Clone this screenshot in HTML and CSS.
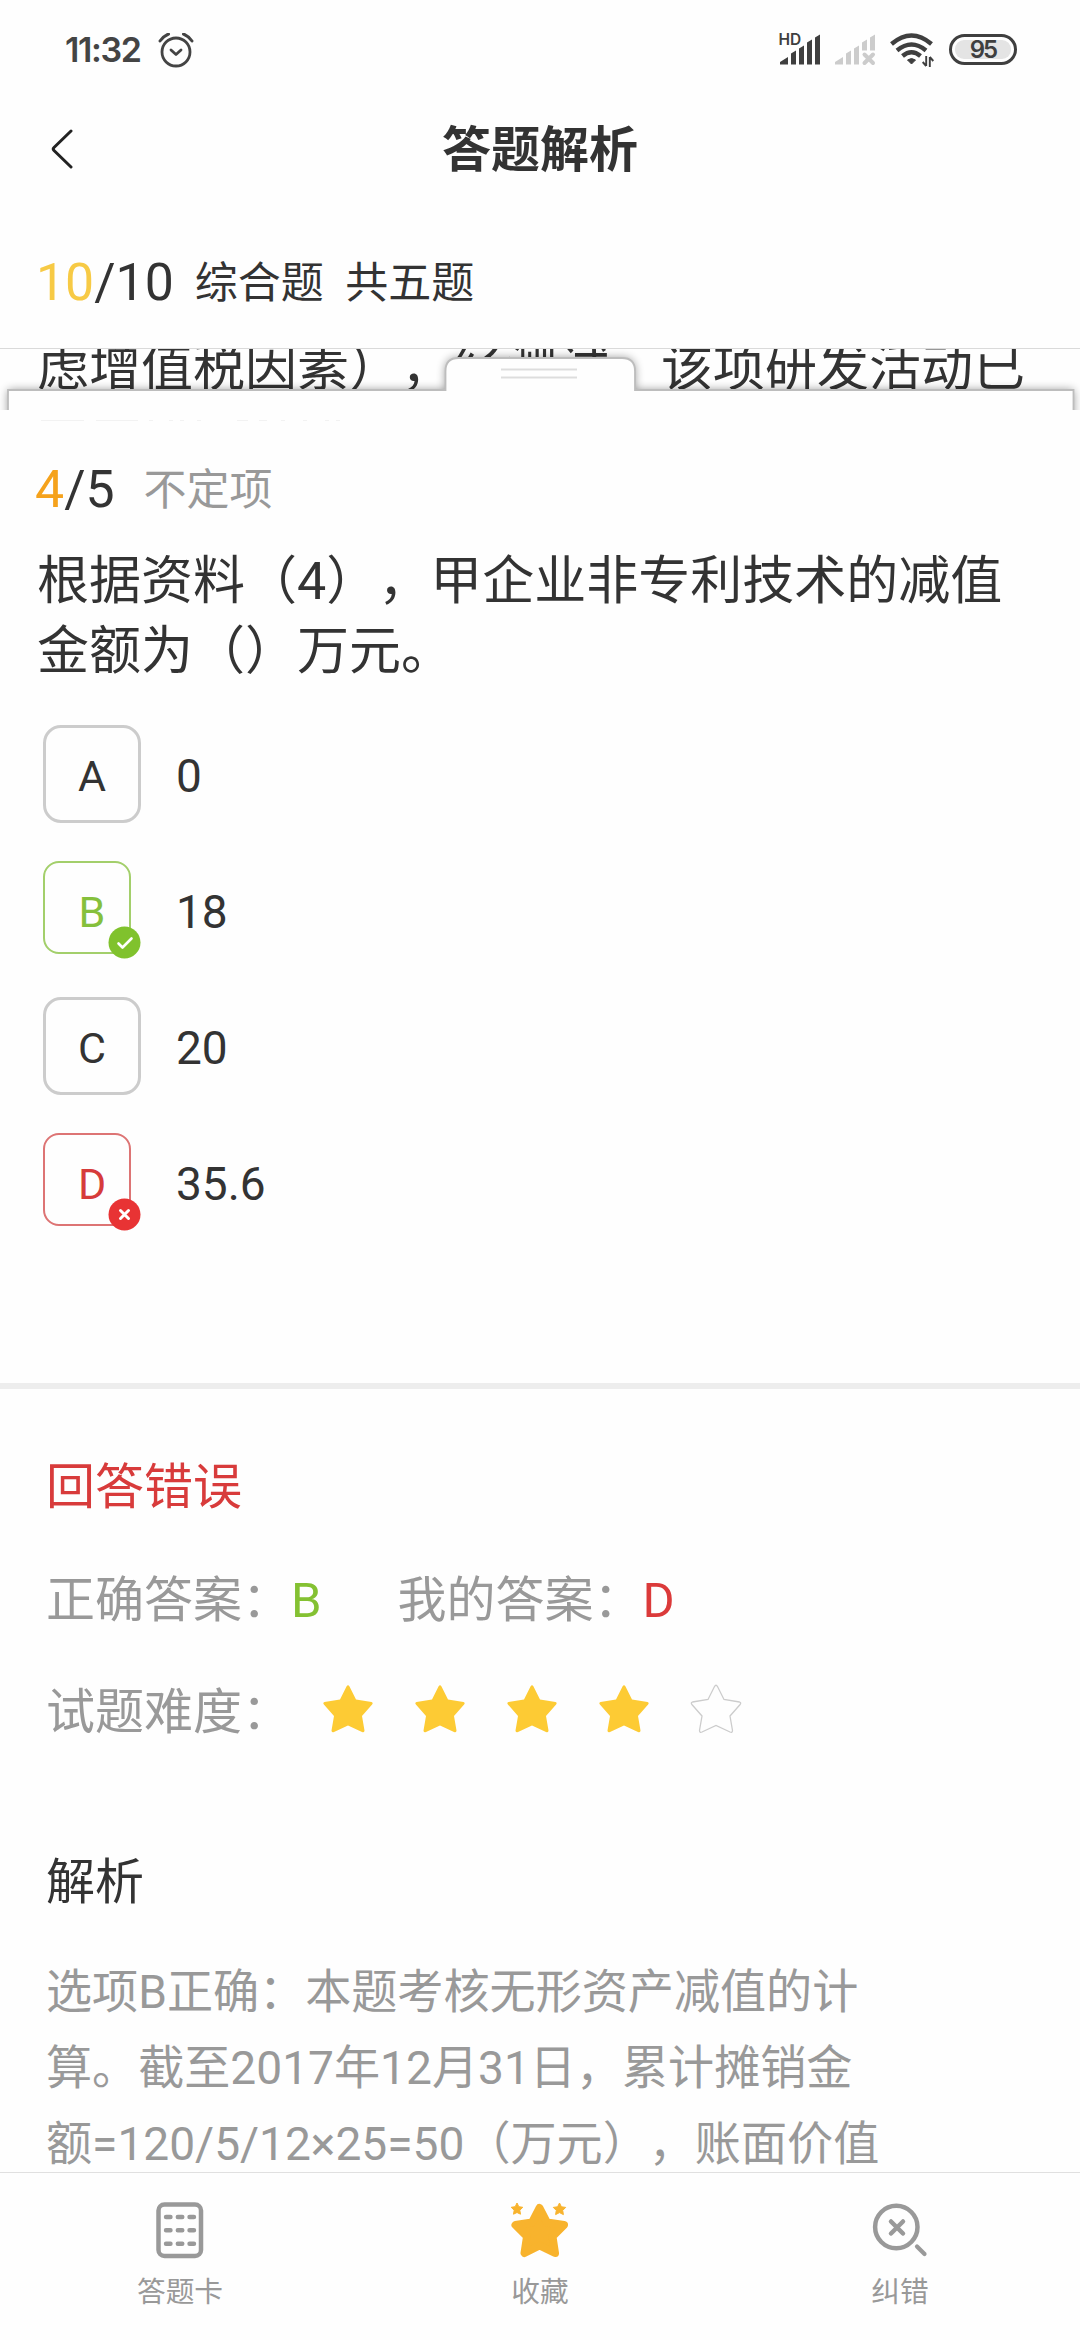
FILE: index.html
```html
<!DOCTYPE html>
<html lang="zh-CN">
<head>
<meta charset="utf-8">
<title>答题解析</title>
<link rel="stylesheet" href="styles.css">
</head>
<body>
<div class="app">
  <header class="status">
    <span class="time">11:32</span>
    <svg class="alarm" width="36" height="36" viewBox="0 0 36 36" fill="none" stroke="#444" stroke-width="2.8" stroke-linecap="round" stroke-linejoin="round"><circle cx="18" cy="19" r="14"/><path d="M13 17l5 4.500 5-4.500"/><path d="M2 8q3.500-5 8.500-7M34 8q-3.500-5-8.500-7" stroke-width="3"/></svg>
    <div class="signals">
      <svg width="42" height="34" viewBox="0 0 42 34" fill="#3f3f3f"><text x="-.5" y="12" class="hd">HD</text><path d="M1 31.500v-2.500l8-5v7.500zM12 31.500v-11l5-3v14zM20 31.500v-16l5-3v19zM28 31.500v-22l5-3v25zM36 31.500v-27l5-3v30z"/></svg>
      <svg width="42" height="34" viewBox="0 0 42 34" fill="#ccc"><path d="M1 31.500v-2.500l8-5v7.500zM12 31.500v-11l5-3v14zM20 31.500v-16l5-3v19zM28 17.500v-8l5-3v11zM36 17.500v-13l5-3v16z"/><path d="M30.500 21.500l8.500 8.500m0-8.500l-8.500 8.500" stroke="#ccc" stroke-width="4" stroke-linecap="round"/></svg>
      <svg class="wifi" width="44" height="36" viewBox="0 0 44 36" fill="none" stroke="#3f3f3f" stroke-width="4.400"><path d="M1.500 12Q21.500-5 41.500 12M7 18.500q14.500-12 29 0M12.500 24q9-7.500 18 0"/><path d="M17.500 28q4-3 8 0l-4 4z" fill="#3f3f3f" stroke-width="1"/><path d="M36.200 24v10M39.800 35V25M36.200 34l-3.500-4M39.800 25l3.500 4" stroke-width="1.900"/></svg>
      <div class="battery"><span>95</span></div>
    </div>
  </header>

  <nav class="titlebar">
    <svg class="back" width="22" height="40" viewBox="0 0 22 40" fill="none" stroke="#222" stroke-width="3" stroke-linecap="round" stroke-linejoin="round"><path d="M20 2L3 18.500q-1.500 1.500 0 3L20 38"/></svg>
    <h1>答题解析</h1>
  </nav>

  <div class="progress"><span class="count"><b>10</b>/10</span><span class="kind">综合题&nbsp; 共五题</span></div>

  <section class="passage">
    <p>虑增值税因素），经测试，该项研发活动已</p>
    <svg class="sheet-edge" width="1080" height="76" viewBox="0 0 1080 76">
      <defs>
        <filter id="soft" x="-5%" y="-50%" width="110%" height="200%"><feGaussianBlur stdDeviation="5"/></filter>
        <clipPath id="edge"><path d="M0 0H1080V62H0z"/></clipPath>
      </defs>
      <g clip-path="url(#edge)">
        <path d="M8 90V42H445.500V23q0-13 13-13H622q13 0 13 13V42H1073.500V90z" fill="#000" opacity=".42" filter="url(#soft)"/>
        <path d="M8 90V42H445.500V23q0-13 13-13H622q13 0 13 13V42H1073.500V90z" fill="#fefefe" stroke="#bdbdbd" stroke-width="1.800"/>
      </g>
      <path d="M0 62H1080V76H0z" fill="#fefefe"/>
      <path d="M41 72.500h43M96 72.500h42M149 72.500h4M169 72.500h4M180 72.500h4M197 72.500h4M237 72.500h11M259 72.500h8M281 72.500h4M303 72.500h4M325 72.500h4M336 72.500h4" stroke="#f2f2f2"/>
      <path d="M501 21.500h76M501 29.500h76" stroke="#ddd" stroke-width="2"/>
    </svg>
  </section>

  <main class="question">
    <div class="subhead"><span class="count"><b>4</b>/5</span><span class="type">不定项</span></div>
    <p class="stem">根据资料（4），甲企业非专利技术的减值<br>金额为（）万元。</p>
    <ul class="options">
      <li><span class="key"><i class="frame"></i>A</span><span class="val">0</span></li>
      <li><span class="key right"><i class="frame"></i>B<svg class="badge" width="33" height="33" viewBox="0 0 33 33"><circle cx="16.500" cy="16.500" r="16" fill="#80c22d"/><path d="M10.500 17.500l4 4 9-9" fill="none" stroke="#fff" stroke-width="2.600" stroke-linecap="round" stroke-linejoin="round"/></svg></span><span class="val">18</span></li>
      <li><span class="key"><i class="frame"></i>C</span><span class="val">20</span></li>
      <li><span class="key wrong"><i class="frame"></i>D<svg class="badge" width="33" height="33" viewBox="0 0 33 33"><circle cx="16.500" cy="16.500" r="16" fill="#e83334"/><path d="M12.500 12.500l8 8m0-8l-8 8" fill="none" stroke="#fff" stroke-width="3" stroke-linecap="round"/></svg></span><span class="val">35.6</span></li>
    </ul>
  </main>

  <section class="analysis">
    <h2 class="verdict">回答错误</h2>
    <div class="answers"><span>正确答案：<b class="ok">B</b></span><span>我的答案：<b class="bad">D</b></span></div>
    <div class="difficulty"><span>试题难度：</span>
      <div class="stars">
        <svg viewBox="0 0 52 50"><path class="star"/></svg>
        <svg viewBox="0 0 52 50"><path class="star"/></svg>
        <svg viewBox="0 0 52 50"><path class="star"/></svg>
        <svg viewBox="0 0 52 50"><path class="star"/></svg>
        <svg viewBox="0 0 52 50"><path class="star empty"/></svg>
      </div>
    </div>
    <h3>解析</h3>
    <p class="explain">选项B正确：本题考核无形资产减值的计<br>算。截至2017年12月31日，累计摊销金<br>额=120/5/12×25=50（万元），账面价值</p>
  </section>

  <footer class="tabs">
    <div class="tab"><svg width="60" height="60" viewBox="0 0 60 60" fill="none" stroke="#999"><rect x="8.500" y="4.500" width="42.500" height="51.500" rx="6" stroke-width="4.500"/><path d="M16 17h4.500M27.800 17h4.500M39.500 17h4.500M16 30.300h4.500M27.800 30.300h4.500M39.500 30.300h4.500M16 43.700h4.500M27.800 43.700h4.500M39.500 43.700h4.500" stroke-width="4.400" stroke-linecap="round"/></svg><span>答题卡</span></div>
    <div class="tab"><svg width="60" height="60" viewBox="0 0 60 60" fill="#f8b32d" stroke="#f8b32d" stroke-linejoin="round"><path d="M29.500 8L37 22.500L54 25L42.500 36.500L45 53L29.500 45.500L14.500 53L17 36.500L5.500 25L22 22.500Z" stroke-width="8"/><path d="M7 3l1.800 3.700 4 .6-3 2.900.7 4L7 12.500l-3.500 1.700.7-4-3-2.900 4-.6zM49.500 3l1.900 3.800 4.300.6-3 3 .7 4.200-3.900-2-3.900 2 .7-4.200-3-3 4.300-.6z" stroke-width="1"/></svg><span>收藏</span></div>
    <div class="tab"><svg width="60" height="60" viewBox="0 0 60 60" fill="none" stroke="#999" stroke-linecap="round"><circle cx="26.300" cy="27" r="21.200" stroke-width="4.500"/><path d="M21 21.500l12 12m0-12l-12 12" stroke-width="4.500"/><path d="M47 46.500l7.500 7.500" stroke-width="4.200"/></svg><span>纠错</span></div>
  </footer>
</div>
</body>
</html>
```
FILE: styles.css
```css
* { box-sizing: border-box; margin: 0; padding: 0; }
body { background: #fefefe; color: #333; font-family: Roboto, "Noto Sans CJK SC", sans-serif; text-spacing-trim: space-all; }
b, i { font-weight: 400; font-style: normal; }
.app { width: 1080px; height: 2340px; display: flex; flex-direction: column; overflow: hidden; white-space: nowrap; }

.status { height: 100px; flex: none; display: flex; align-items: center; padding: 0 63px 0 65px; }
.time { font: 600 34px/40px Inter, sans-serif; color: #444; width: 75px; letter-spacing: -1.400px; }
.alarm { margin-left: 18px; margin-top: 2px; }
.signals { margin-left: auto; display: flex; align-items: center; gap: 13px; }
.signals svg { display: block; overflow: visible; }
.signals .wifi { margin: 0 -1px 0 1px; }
.hd { font: 600 15.500px Inter, sans-serif; }
.battery { width: 68px; height: 31px; border: 3px solid #3f3f3f; border-radius: 16px; padding: 3px; margin: -2px 0 0 3px; }
.battery span { display: block; height: 19px; border-radius: 9px; background: #e4e4e4; font: 600 24px/20px Inter, sans-serif; text-align: center; letter-spacing: -2px; color: #3f3f3f; }

.titlebar { height: 100px; flex: none; display: grid; grid-template-columns: 100px 1fr 100px; align-items: center; }
.back { margin-left: 51px; margin-top: -2px; }
.titlebar h1 { font-size: 49px; line-height: 72px; font-weight: 700; text-align: center; padding-top: 2px; }

.progress { height: 149px; flex: none; display: flex; align-items: center; gap: 21px; padding: 18px 36px 0; border-bottom: 1px solid #dadada; }
.count { font-size: 51.800px; line-height: 64px; }
.progress .count b { color: #f7ca45; }
.kind { font-size: 43px; line-height: 64px; }

.passage { height: 75px; flex: none; overflow: hidden; position: relative; padding-left: 37px; }
.passage p { font-size: 52px; line-height: 70px; margin-top: -15px; }
.sheet-edge { position: absolute; left: 0; top: -1px; }

.question { height: 959px; flex: none; padding: 33px 35px 0 36px; }
.subhead { display: flex; align-items: center; gap: 29px; height: 66px; margin-left: -1px; }
.subhead .count b { color: #f5a21c; }
.type { font-size: 43px; line-height: 64px; color: #999; }
.stem { font-size: 52px; line-height: 70px; margin: 24px 0 0 1px; }
.options { list-style: none; margin-top: 38px; padding-left: 7px; }
.options li { display: flex; align-items: center; height: 98px; margin-bottom: 38px; }
.key { position: relative; width: 98px; height: 98px; display: flex; align-items: center; justify-content: center; padding-top: 3px; font-size: 43px; }
.frame { position: absolute; inset: 0; border: 3px solid #ccc; border-radius: 18px; }
.right .frame, .wrong .frame { inset: 0 10px 5px 0; border-width: 2px; border-radius: 16px; }
.right { color: #85c03c; }
.right .frame { border-color: #a3cf6b; }
.wrong { color: #d63b3b; }
.wrong .frame { border-color: #dd7474; }
.badge { position: absolute; right: 0; bottom: 0; }
.val { font-size: 46px; margin: 3px 0 0 35px; }

.analysis { height: 789px; flex: none; overflow: hidden; border-top: 6px solid #ededed; padding: 0 46px; color: #999; font-size: 49px; }
.verdict { font-size: 49px; font-weight: 400; line-height: 72px; color: #d83b3b; margin-top: 63px; }
.answers { display: flex; gap: 76px; line-height: 72px; margin-top: 41px; }
.ok { color: #84c132; }
.bad { color: #db3a3a; }
.difficulty { display: flex; align-items: center; line-height: 72px; margin-top: 40px; }
.stars { display: flex; gap: 40px; margin: 0 0 8px 31px; }
.stars svg { width: 52px; height: 50px; display: block; }
.star { d: path("M24.5 2.500q1.500-2.500 3 0L34 15.500l15.500 2.500q2 .6.600 2.500L40 32l2.500 14.500q0 2.500-2.500 1.500L26 41.500 12 48q-2.500 1-2.500-1.500L12 32 1.900 20.500q-1.400-1.900.6-2.500L18 15.500z"); fill: #fdcb34; }
.empty { fill: none; stroke: #ccc; stroke-width: 1.300; }
.analysis h3 { font-size: 49px; font-weight: 400; line-height: 72px; color: #333; margin-top: 98px; }
.explain { font-size: 46.100px; line-height: 76px; margin-top: 35px; }

.tabs { flex: 1; border-top: 1px solid #e0e0e0; display: grid; grid-template-columns: repeat(3, 1fr); }
.tab { display: flex; flex-direction: column; align-items: center; padding-top: 27px; }
.tab svg { display: block; }
.tab span { font-size: 28.700px; line-height: 42px; margin-top: 11px; color: #999; }
```
